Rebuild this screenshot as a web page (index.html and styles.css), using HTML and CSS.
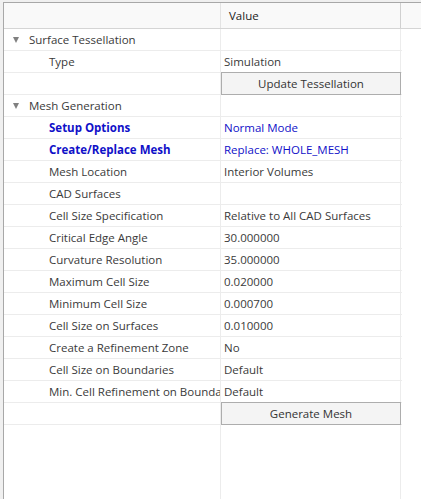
FILE: index.html
```html
<!DOCTYPE html>
<html>
<head>
<meta charset="utf-8">
<link rel="stylesheet" href="styles.css">
</head>
<body>
<div class="frame">
  <div class="header">
    <div class="hname"></div>
    <div class="hval">Value</div>
    <div class="hfill"></div>
  </div>
  <div class="rows">
    <div class="row"><div class="name group"><span class="tri"></span>Surface Tessellation</div><div class="val"></div></div>
    <div class="row"><div class="name child">Type</div><div class="val">Simulation</div></div>
    <div class="row"><div class="name"></div><div class="val btncell"><div class="btn">Update Tessellation</div></div></div>
    <div class="row"><div class="name group"><span class="tri"></span>Mesh Generation</div><div class="val"></div></div>
    <div class="row"><div class="name child key">Setup Options</div><div class="val keyval">Normal Mode</div></div>
    <div class="row"><div class="name child key">Create/Replace Mesh</div><div class="val keyval">Replace: WHOLE_MESH</div></div>
    <div class="row"><div class="name child">Mesh Location</div><div class="val">Interior Volumes</div></div>
    <div class="row"><div class="name child">CAD Surfaces</div><div class="val"></div></div>
    <div class="row"><div class="name child">Cell Size Specification</div><div class="val">Relative to All CAD Surfaces</div></div>
    <div class="row"><div class="name child">Critical Edge Angle</div><div class="val">30.000000</div></div>
    <div class="row"><div class="name child">Curvature Resolution</div><div class="val">35.000000</div></div>
    <div class="row"><div class="name child">Maximum Cell Size</div><div class="val">0.020000</div></div>
    <div class="row"><div class="name child">Minimum Cell Size</div><div class="val">0.000700</div></div>
    <div class="row"><div class="name child">Cell Size on Surfaces</div><div class="val">0.010000</div></div>
    <div class="row"><div class="name child">Create a Refinement Zone</div><div class="val">No</div></div>
    <div class="row"><div class="name child">Cell Size on Boundaries</div><div class="val">Default</div></div>
    <div class="row"><div class="name child">Min. Cell Refinement on Boundaries</div><div class="val">Default</div></div>
    <div class="row"><div class="name"></div><div class="val btncell"><div class="btn">Generate Mesh</div></div></div>
    <div class="filler"><div class="name"></div><div class="val"></div></div>
  </div>
</div>
</body>
</html>
```
FILE: styles.css
```css
html, body {
  margin: 0;
  padding: 0;
  height: 100%;
  background: #f0f0f0;
  overflow: hidden;
}
body {
  font-family: "Open Sans", "Noto Sans", sans-serif;
  font-size: 11.5px;
  color: #3a3a3a;
}
.frame {
  position: absolute;
  left: 3px;
  top: 2px;
  right: 0;
  bottom: 0;
  border-top: 1px solid #a8a8a8;
  border-left: 1px solid #a8a8a8;
  background: #ffffff;
  display: flex;
  flex-direction: column;
}
.header {
  display: flex;
  height: 25px;
  border-bottom: 1px solid #d5d5d5;
  background: #f9f9f9;
  flex: none;
}
.hname {
  width: 217px;
  box-sizing: border-box;
  border-right: 1px solid #e3e3e3;
}
.hval {
  width: 180px;
  box-sizing: border-box;
  padding-left: 8px;
  border-right: 1px solid #d0d0d0;
  line-height: 25px;
  color: #222;
}
.hfill {
  flex: 1;
}
.rows {
  flex: 1;
  display: flex;
  flex-direction: column;
}
.row {
  display: flex;
  height: 21px;
  border-bottom: 1px solid #ececec;
  width: 398px;
  flex: none;
}
.name {
  width: 217px;
  border-right: 1px solid #ececec;
  white-space: nowrap;
  overflow: hidden;
  line-height: 21px;
  box-sizing: border-box;
  flex: none;
}
.val {
  width: 180px;
  border-right: 1px solid #ececec;
  white-space: nowrap;
  overflow: hidden;
  line-height: 21px;
  padding-left: 3px;
  box-sizing: border-box;
  flex: none;
}
.group {
  padding-left: 9px;
  display: flex;
  align-items: center;
}
.tri {
  display: block;
  width: 0;
  height: 0;
  border-left: 3.5px solid transparent;
  border-right: 3.5px solid transparent;
  border-top: 6px solid #808080;
  margin-right: 10px;
  margin-top: 1px;
}
.child {
  padding-left: 45px;
}
.key {
  font-weight: bold;
  color: #1010c8;
}
.keyval {
  color: #1010c8;
}
.btncell {
  padding: 0;
  height: 23px;
  margin-top: -1px;
  position: relative;
  z-index: 1;
  overflow: visible;
}
.btn {
  height: 21px;
  border: 1px solid #adadad;
  background: #f4f4f4;
  text-align: center;
  line-height: 21px;
  color: #333;
  width: 178px;
}
.filler {
  flex: 1;
  display: flex;
  width: 398px;
}
.filler .name, .filler .val {
  height: 100%;
}
```
